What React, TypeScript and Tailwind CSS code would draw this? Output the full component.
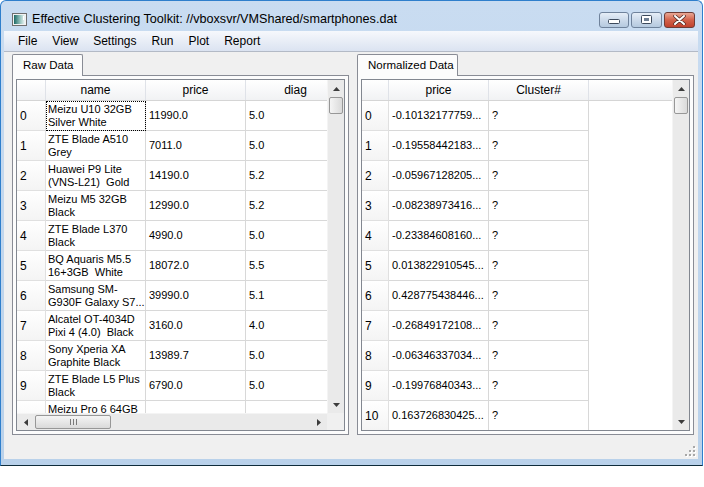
import React from "react";

// raw table rows: [line1, line2, price, diag]
const rawRows: string[][] = [
  ["Meizu U10 32GB", "Silver White", "11990.0", "5.0"],
  ["ZTE Blade A510", "Grey", "7011.0", "5.0"],
  ["Huawei P9 Lite", "(VNS-L21)  Gold", "14190.0", "5.2"],
  ["Meizu M5 32GB", "Black", "12990.0", "5.2"],
  ["ZTE Blade L370", "Black", "4990.0", "5.0"],
  ["BQ Aquaris M5.5", "16+3GB  White", "18072.0", "5.5"],
  ["Samsung SM-", "G930F Galaxy S7...", "39990.0", "5.1"],
  ["Alcatel OT-4034D", "Pixi 4 (4.0)  Black", "3160.0", "4.0"],
  ["Sony Xperia XA", "Graphite Black", "13989.7", "5.0"],
  ["ZTE Blade L5 Plus", "Black", "6790.0", "5.0"],
  ["Meizu Pro 6 64GB", "Gold", "", ""],
];

const normRows: string[] = [
  "-0.10132177759...",
  "-0.19558442183...",
  "-0.05967128205...",
  "-0.08238973416...",
  "-0.23384608160...",
  "0.013822910545...",
  "0.428775438446...",
  "-0.26849172108...",
  "-0.06346337034...",
  "-0.19976840343...",
  "0.163726830425...",
];

const Arrow = ({ dir }: { dir: "up" | "down" | "left" | "right" }) => {
  const pts = {
    up: "0,4 7,4 3.5,0",
    down: "0,0 7,0 3.5,4",
    left: "4,0 4,7 0,3.5",
    right: "0,0 0,7 4,3.5",
  }[dir];
  const vertical = dir === "up" || dir === "down";
  return (
    <svg width={vertical ? 7 : 4} height={vertical ? 4 : 7}>
      <polygon points={pts} fill="#3c3c3c" />
    </svg>
  );
};

const VScroll = () => (
  <div className="w-[17px] shrink-0 flex flex-col bg-[#eaeaea] border-l border-[#f4f4f4]">
    <div className="h-[17px] flex items-center justify-center">
      <Arrow dir="up" />
    </div>
    <div className="flex-1 px-[1px]">
      <div className="h-[17px] rounded-[2px] border border-[#979797] bg-gradient-to-r from-[#f5f5f5] to-[#dadada]" />
    </div>
    <div className="h-[17px] flex items-center justify-center">
      <Arrow dir="down" />
    </div>
  </div>
);

const HScroll = () => (
  <div className="h-[17px] shrink-0 flex bg-[#eaeaea] border-t border-[#f4f4f4]">
    <div className="w-[17px] flex items-center justify-center">
      <Arrow dir="left" />
    </div>
    <div className="flex-1 py-[1px]">
      <div className="ml-[1px] w-[76px] h-full rounded-[2px] border border-[#979797] bg-gradient-to-b from-[#f5f5f5] to-[#dadada] flex items-center justify-center gap-[2px]">
        <div className="w-[1px] h-[6px] bg-[#7a7a7a]" />
        <div className="w-[1px] h-[6px] bg-[#7a7a7a]" />
        <div className="w-[1px] h-[6px] bg-[#7a7a7a]" />
      </div>
    </div>
    <div className="w-[17px] flex items-center justify-center">
      <Arrow dir="right" />
    </div>
  </div>
);

const HeaderCell = ({ w, children }: { w: string; children?: React.ReactNode }) => (
  <div
    className={`${w} shrink-0 h-full flex items-center justify-center border-r border-[#dfe2e8] text-[12px] text-black`}
  >
    {children}
  </div>
);

const RawTable = () => (
  <div className="flex-1 flex flex-col border border-[#828790] bg-white overflow-hidden">
    <div className="flex flex-1 min-h-0">
      <div className="w-[310px] overflow-hidden">
        <div className="w-[330px]">
          <div className="flex h-[21px] border-b border-[#d5d5d5] bg-gradient-to-b from-white to-[#f1f2f4]">
            <HeaderCell w="w-[29px]" />
            <HeaderCell w="w-[100px]">name</HeaderCell>
            <HeaderCell w="w-[100px]">price</HeaderCell>
            <HeaderCell w="w-[100px]">diag</HeaderCell>
          </div>
          {rawRows.map((r, i) => (
            <div key={i} className="flex h-[30px]">
              <div className="w-[29px] shrink-0 flex items-center pl-[3px] text-[12px] bg-gradient-to-b from-white to-[#f4f4f4] border-r border-b border-[#e0e0e0]">
                {i < 10 ? i : ""}
              </div>
              <div
                className={`w-[100px] shrink-0 flex flex-col justify-center px-[2px] text-[11px] leading-[13px] border-r border-b border-[#d8d8d8] whitespace-pre overflow-hidden ${
                  i === 0 ? "outline outline-1 outline-dotted outline-black -outline-offset-1" : ""
                }`}
              >
                <span>{r[0]}</span>
                <span>{r[1]}</span>
              </div>
              <div className="w-[100px] shrink-0 flex items-center px-[3px] text-[11px] border-r border-b border-[#d8d8d8]">
                {r[2]}
              </div>
              <div className="w-[100px] shrink-0 flex items-center px-[3px] text-[11px] border-r border-b border-[#d8d8d8]">
                {r[3]}
              </div>
            </div>
          ))}
        </div>
      </div>
      <VScroll />
    </div>
    <div className="flex">
      <div className="flex-1">
        <HScroll />
      </div>
      <div className="w-[17px] h-[17px] bg-[#f0f0f0]" />
    </div>
  </div>
);

const NormTable = () => (
  <div className="flex-1 flex border border-[#828790] bg-white overflow-hidden">
    <div className="flex-1 overflow-hidden">
      <div className="flex h-[21px] border-b border-[#d5d5d5] bg-gradient-to-b from-white to-[#f1f2f4]">
        <HeaderCell w="w-[27px]" />
        <HeaderCell w="w-[100px]">price</HeaderCell>
        <HeaderCell w="w-[100px]">Cluster#</HeaderCell>
        <div className="flex-1" />
      </div>
      {normRows.map((v, i) => (
        <div key={i} className="flex h-[30px]">
          <div className="w-[27px] shrink-0 flex items-center pl-[3px] text-[12px] bg-gradient-to-b from-white to-[#f4f4f4] border-r border-b border-[#e0e0e0]">
            {i}
          </div>
          <div className="w-[100px] shrink-0 flex items-center px-[3px] text-[11px] border-r border-b border-[#d8d8d8] whitespace-nowrap overflow-hidden">
            {v}
          </div>
          <div className="w-[100px] shrink-0 flex items-center px-[3px] text-[11px] border-r border-b border-[#d8d8d8]">
            ?
          </div>
        </div>
      ))}
    </div>
    <VScroll />
  </div>
);

const TabPane = ({ label, tabW, children }: { label: string; tabW: string; children: React.ReactNode }) => (
  <div className="flex-1 flex flex-col">
    <div className="flex h-[21px]">
      <div
        className={`${tabW} relative z-10 h-[22px] flex items-center pl-[10px] text-[11.5px] whitespace-nowrap bg-[#fcfcfc] border border-b-0 border-[#898c95] rounded-t-[2px]`}
      >
        {label}
      </div>
    </div>
    <div className="h-[360px] flex flex-col p-[3px] border border-[#898c95] bg-[#fcfcfc]">{children}</div>
  </div>
);

const TitleIcon = () => (
  <svg width="15" height="13" viewBox="0 0 15 13">
    <defs>
      <linearGradient id="ico" x1="0" y1="0" x2="1" y2="0">
        <stop offset="0" stopColor="#1d6a66" />
        <stop offset="0.6" stopColor="#9fc9c4" />
        <stop offset="1" stopColor="#f4f8f8" />
      </linearGradient>
    </defs>
    <rect x="0.5" y="0.5" width="14" height="12" fill="#f2f2f2" stroke="#6e6e6e" />
    <rect x="2" y="2" width="11" height="9" fill="url(#ico)" />
    <rect x="11" y="3" width="1" height="4" fill="#ffffff" />
  </svg>
);

const WinButton = ({ kind }: { kind: "min" | "max" | "close" }) => {
  const base = "h-[16px] rounded-[3px] border flex items-center justify-center";
  if (kind === "close")
    return (
      <div className={`${base} w-[31px] border-[#6e3c36] bg-gradient-to-b from-[#e8a795] via-[#d2614a] to-[#c0412d]`}>
        <svg width="13" height="10" viewBox="0 0 13 10">
          <path d="M2 1 L11 9 M11 1 L2 9" stroke="#4a2a26" strokeWidth="3.4" strokeLinecap="round" />
          <path d="M2 1 L11 9 M11 1 L2 9" stroke="#ffffff" strokeWidth="2" strokeLinecap="round" />
        </svg>
      </div>
    );
  return (
    <div className={`${base} ${kind === "min" ? "w-[30px]" : "w-[31px]"} border-[#6f829b] bg-gradient-to-b from-[#e6eef7] via-[#ccdaea] to-[#b5c9df]`}>
      {kind === "min" ? (
        <svg width="12" height="6" viewBox="0 0 12 6" className="mt-[4px]">
          <rect x="0.5" y="0.5" width="11" height="4" rx="1" fill="#ffffff" stroke="#3d4a5c" />
        </svg>
      ) : (
        <svg width="11" height="9" viewBox="0 0 11 9">
          <rect x="0.5" y="0.5" width="10" height="8" rx="1" fill="#ffffff" stroke="#3d4a5c" />
          <rect x="3" y="3" width="5" height="3" fill="#6f7f93" />
        </svg>
      )}
    </div>
  );
};

const SizeGrip = () => (
  <svg width="11" height="11" viewBox="0 0 11 11">
    {[
      [8, 0],
      [4, 4],
      [8, 4],
      [0, 8],
      [4, 8],
      [8, 8],
    ].map(([x, y], i) => (
      <g key={i}>
        <rect x={x + 1} y={y + 1} width="2" height="2" fill="#ffffff" />
        <rect x={x} y={y} width="2" height="2" fill="#a7a7a7" />
      </g>
    ))}
  </svg>
);

export default function App() {
  const menus = ["File", "View", "Settings", "Run", "Plot", "Report"];
  return (
    <div className="w-[704px] h-[487px] bg-white font-['Liberation_Sans',Arial,sans-serif] text-black">
      <div className="w-[703px] h-[466px] flex flex-col bg-gradient-to-b from-[#c9dcf1] to-[#b9d1ea] border border-[#2f7fcc] border-b-[#0f2c3a] rounded-t-[6px]">
        {/* title bar */}
        <div className="h-[30px] shrink-0 flex items-center pt-[7px] pl-[11px] pr-[7px]">
          <TitleIcon />
          <span className="ml-[5px] text-[12.6px]">Effective Clustering Toolkit: //vboxsvr/VMShared/smartphones.dat</span>
          <div className="ml-auto flex gap-[2px]">
            <WinButton kind="min" />
            <WinButton kind="max" />
            <WinButton kind="close" />
          </div>
        </div>
        {/* client */}
        <div className="flex-1 flex flex-col mx-[3px] mr-[4px] mb-[6px] bg-[#f0f0f0]">
          <div className="h-[21px] shrink-0 flex items-center px-[6.5px] bg-gradient-to-b from-[#f6f8fc] to-[#dbe3f1] border-b border-[#b3bac6]">
            {menus.map((m) => (
              <span key={m} className="px-[7.5px] text-[12px]">
                {m}
              </span>
            ))}
          </div>
          <div className="h-[383px] shrink-0 flex gap-[8px] pt-[2px] pl-[8px] pr-[4px]">
            <TabPane label="Raw Data" tabW="w-[71px]">
              <RawTable />
            </TabPane>
            <TabPane label="Normalized Data" tabW="w-[101px]">
              <NormTable />
            </TabPane>
          </div>
          <div className="flex-1 flex items-end justify-end pr-[2px] pb-[2px]">
            <SizeGrip />
          </div>
        </div>
      </div>
    </div>
  );
}
